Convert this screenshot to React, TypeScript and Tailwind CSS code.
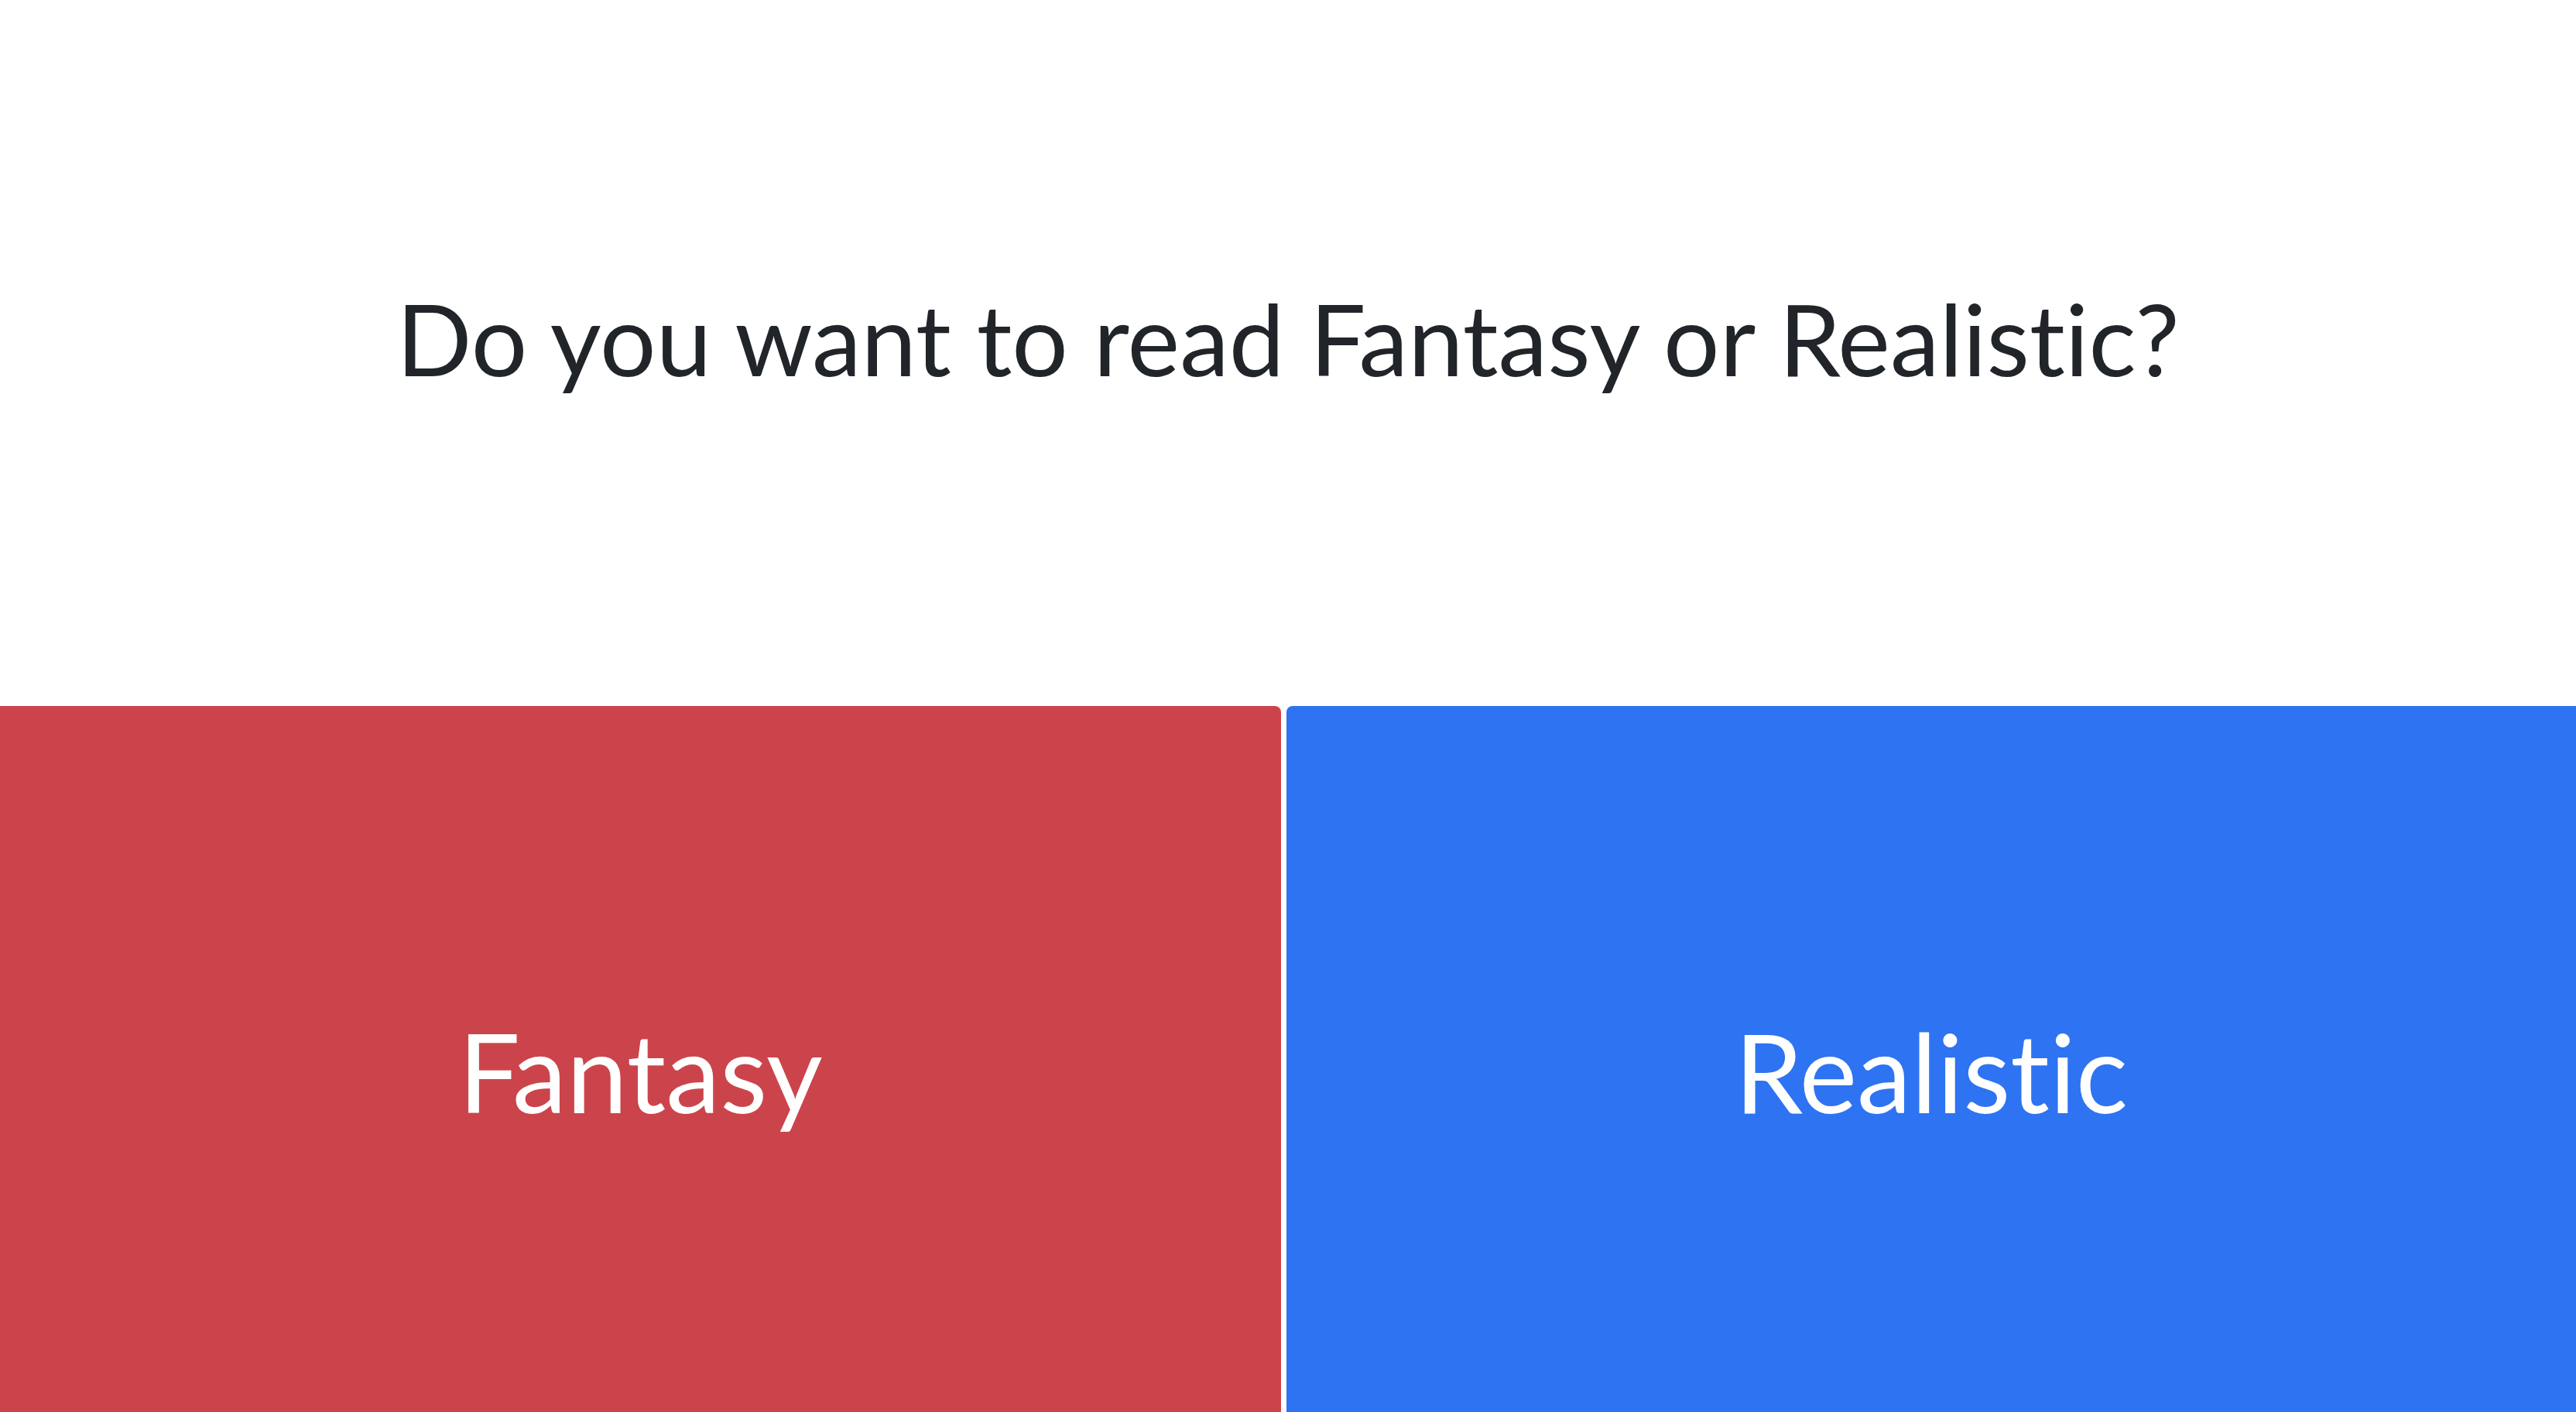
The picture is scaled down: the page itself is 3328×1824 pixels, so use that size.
export default function App() {
  return (
    <div className="h-[1824px] w-full overflow-hidden bg-white font-['Lato',sans-serif] [font-variant-ligatures:none]">
      <div className="h-[912px] pt-[360px] text-center">
        <h1 className="text-[128px] leading-[1.2] font-normal text-[#212529]">
          Do you want to read Fantasy or Realistic?
        </h1>
      </div>
      <div className="flex h-[912px] gap-[7px]">
        <button className="flex w-[1655px] items-center justify-center rounded-tr-lg bg-[#cc444b] pt-[32px] text-[141px] leading-[1.2] text-white">
          Fantasy
        </button>
        <button className="flex flex-1 items-center justify-center rounded-tl-lg bg-[#2e73f1] pt-[32px] text-[141px] leading-[1.2] text-white">
          Realistic
        </button>
      </div>
    </div>
  );
}
